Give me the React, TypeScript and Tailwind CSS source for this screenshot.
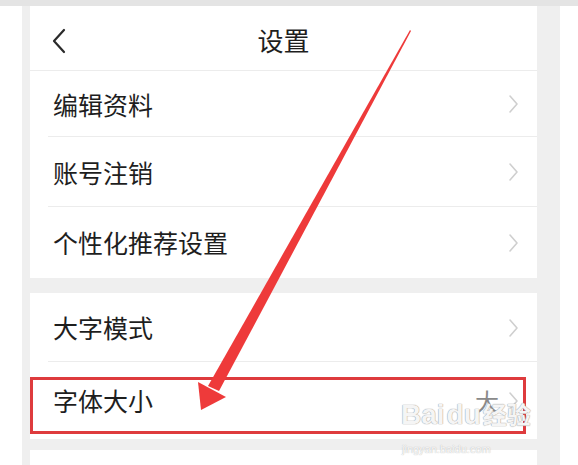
import React from "react";

const Chevron = () => (
  <svg width="12" height="20" viewBox="0 0 12 20" className="shrink-0">
    <polyline points="3,2 10,10 3,18" fill="none" stroke="#cfcfcf" strokeWidth="1.6" strokeLinecap="round" strokeLinejoin="round" />
  </svg>
);

const Row = ({ label, value, sep = true, h }: { label: string; value?: string; sep?: boolean; h: string }) => (
  <div className={`relative flex items-center pl-[23px] pr-[18px] ${h}`}>
    <span className="flex-1 text-[25px] text-[#1e1e1e] leading-none">{label}</span>
    {value && <span className="mr-[8px] text-[24px] text-[#8a8a8a] leading-none">{value}</span>}
    <Chevron />
    {sep && <div className="absolute bottom-0 left-[18px] right-0 h-px bg-[#ececec]" />}
  </div>
);

export default function App() {
  return (
    <div className="relative w-[578px] h-[465px] overflow-hidden bg-white" style={{ fontFamily: '"Noto Sans CJK SC", "Noto Sans", sans-serif' }}>
      <div className="h-[6px] bg-[#e4e4e4]" />
      <div className="flex h-[459px]">
        <div className="w-[22px] bg-white" />
        <div className="flex w-[538px] flex-col bg-[#efefef] pl-[8px] pr-[23px]">
          <div className="flex flex-col bg-white">
            <div className="relative flex h-[65px] items-center justify-center border-b border-[#ececec] pt-[4px]">
              <svg width="14" height="26" viewBox="0 0 14 26" className="absolute left-[22px] top-[22px]">
                <polyline points="12,2 2,13 12,24" fill="none" stroke="#2a2a2a" strokeWidth="2.2" strokeLinecap="round" strokeLinejoin="round" />
              </svg>
              <span className="text-[26px] text-[#1e1e1e] leading-none">设置</span>
            </div>
            <Row label="编辑资料" h="h-[66px]" />
            <Row label="账号注销" h="h-[70px]" />
            <Row label="个性化推荐设置" h="h-[71px]" sep={false} />
          </div>
          <div className="mt-[15px] flex flex-col bg-white">
            <Row label="大字模式" h="h-[69px]" />
            <Row label="字体大小" value="大" h="h-[77px]" sep={false} />
          </div>
          <div className="mt-[11px] flex-1 bg-white" />
        </div>
        <div className="flex-1 bg-white" />
      </div>

      <div className="absolute left-[30px] top-[377px] h-[57px] w-[496px] border-[3px] border-[#de3b3d]" />

      <svg className="absolute left-0 top-0" width="578" height="465" viewBox="0 0 578 465">
        <polygon points="410,30 411,31 219,391 208,386" fill="#ee3a3a" />
        <polygon points="201,410 198,382 226,397" fill="#ee3a3a" />
      </svg>

      <div className="absolute left-[401px] top-[401px] flex items-baseline text-[28px] font-bold leading-none text-white/90 [text-shadow:0_0_1px_#9a9a9a,0_0_1px_#9a9a9a]" style={{ fontFamily: '"Liberation Sans", "Noto Sans CJK SC", sans-serif' }}>
        <span>Bai</span>
        <span className="ml-[2px]">du</span>
        <span className="ml-[2px] text-[24px]">经验</span>
      </div>
      <div className="absolute left-[402px] top-[444px] text-[11px] leading-none text-white/90 [text-shadow:0_0_1px_#a0a0a0]" style={{ fontFamily: '"Liberation Sans", sans-serif' }}>
        jingyan.baidu.com
      </div>
    </div>
  );
}
